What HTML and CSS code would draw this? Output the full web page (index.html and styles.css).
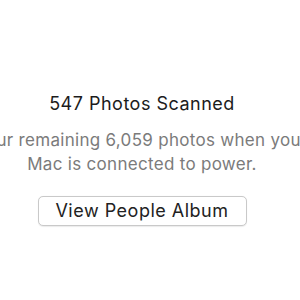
FILE: index.html
```html
<!DOCTYPE html>
<html>
<head>
<meta charset="utf-8">
<link rel="stylesheet" href="styles.css">
</head>
<body>
<div class="page">
  <div class="panel">
    <h1 class="title">547 Photos Scanned</h1>
    <p class="message">
      <span class="line">your remaining 6,059 photos when your</span>
      <span class="line">Mac is connected to power.</span>
    </p>
    <button class="btn" type="button">View People Album</button>
  </div>
</div>
</body>
</html>
```

FILE: styles.css
```css
html, body {
  margin: 0;
  padding: 0;
  background: #ffffff;
}

.page {
  width: 300px;
  height: 300px;
  overflow: hidden;
  font-family: Inter, "Liberation Sans", sans-serif;
}

.panel {
  width: 284px;
  padding-top: 93px;
  display: flex;
  flex-direction: column;
  align-items: center;
}

.title {
  margin: 0;
  font-size: 18px;
  line-height: 21px;
  letter-spacing: 0.5px;
  font-weight: 400;
  color: #1c1c1c;
  white-space: nowrap;
}

.message {
  margin: 14px 0 0;
  display: flex;
  flex-direction: column;
  align-items: center;
  font-size: 17px;
  line-height: 24px;
  letter-spacing: 0.3px;
  color: #7b7b7b;
}

.line {
  white-space: nowrap;
}

.btn {
  margin-top: 20px;
  width: 209px;
  height: 30px;
  padding: 0;
  border: 1px solid #c9c9c9;
  border-radius: 5px;
  background: #ffffff;
  box-shadow: 0 0.5px 1px rgba(0, 0, 0, 0.08);
  font-family: inherit;
  font-size: 18px;
  line-height: 28px;
  letter-spacing: 0.5px;
  color: #222222;
}
```
